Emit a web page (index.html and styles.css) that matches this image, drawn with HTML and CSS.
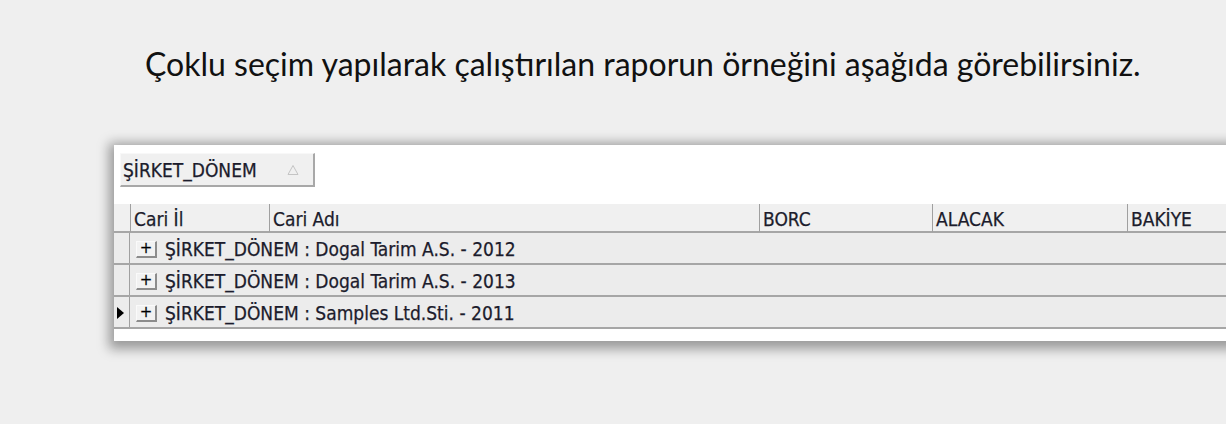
FILE: index.html
```html
<!DOCTYPE html>
<html lang="tr">
<head>
<meta charset="utf-8">
<title>Rapor</title>
<link rel="stylesheet" href="styles.css">
</head>
<body>
<p class="caption">Çoklu seçim yapılarak çalıştırılan raporun örneğini aşağıda görebilirsiniz.</p>
<div class="window">
  <div class="groupbar">
    <div class="groupbtn">
      <span class="groupbtn-text">ŞİRKET_DÖNEM</span>
      <svg class="sort-arrow" width="12" height="12" viewBox="0 0 12 12"><polygon points="6,1.5 11,10.5 1,10.5" fill="none" stroke="#c4c4c4" stroke-width="1"/></svg>
    </div>
  </div>
  <div class="grid">
    <div class="hdr">
      <div class="ind"></div>
      <div class="hcell c1">Cari İl</div>
      <div class="hcell c2">Cari Adı</div>
      <div class="hcell c3">BORC</div>
      <div class="hcell c4">ALACAK</div>
      <div class="hcell c5">BAKİYE</div>
    </div>
    <div class="grow">
      <div class="ind"></div>
      <div class="gcell"><span class="plus">+</span><span>ŞİRKET_DÖNEM : Dogal Tarim A.S. - 2012</span></div>
    </div>
    <div class="grow">
      <div class="ind"></div>
      <div class="gcell"><span class="plus">+</span><span>ŞİRKET_DÖNEM : Dogal Tarim A.S. - 2013</span></div>
    </div>
    <div class="grow">
      <div class="ind"><span class="cur"></span></div>
      <div class="gcell"><span class="plus">+</span><span>ŞİRKET_DÖNEM : Samples Ltd.Sti. - 2011</span></div>
    </div>
  </div>
</div>
</body>
</html>
```

FILE: styles.css
```css
html, body {
  margin: 0;
  padding: 0;
}
body {
  width: 1226px;
  height: 424px;
  overflow: hidden;
  background: #efefef;
}
.caption {
  margin: 0;
  padding: 44px 0 0 145px;
  height: 145px;
  box-sizing: border-box;
  font-family: Lato, "Open Sans", sans-serif;
  font-size: 32px;
  line-height: 40px;
  color: #111;
  white-space: nowrap;
}
.window {
  margin-left: 114px;
  width: 1200px;
  background: #fff;
  padding: 8px 0 12px 0;
  box-shadow: 0 3px 11px 5px rgba(0,0,0,0.36);
  font-family: "DejaVu Sans Condensed", "DejaVu Sans", sans-serif;
  font-size: 19px;
  color: #1c1c2c;
  -webkit-text-stroke: 0.25px #1c1c2c;
}
.groupbar {
  display: flex;
  padding-left: 6px;
  height: 51px;
  align-items: flex-start;
}
.groupbtn {
  display: flex;
  align-items: center;
  justify-content: space-between;
  width: 195px;
  height: 34px;
  box-sizing: border-box;
  background: #f0f0f0;
  border-top: 1px solid #f8f8f8;
  border-left: 1px solid #f8f8f8;
  border-right: 2px solid #a8a8a8;
  border-bottom: 2px solid #a8a8a8;
  padding: 0 14px 0 2px;
}
.sort-arrow { display: block; }
.grid {
  display: flex;
  flex-direction: column;
}
.hdr {
  display: grid;
  grid-template-columns: 16px 139px 490px 173px 195px 1fr;
  height: 29px;
  box-sizing: border-box;
  background: #f0f0f0;
  border-bottom: 2px solid #a6a6a6;
}
.hcell {
  border-left: 1px solid #a0a0a0;
  padding: 2px 0 0 3px;
  line-height: 26px;
  white-space: nowrap;
}
.grow {
  display: flex;
  height: 32px;
  box-sizing: border-box;
  background: #ececec;
  border-bottom: 2px solid #a6a6a6;
}
.ind {
  width: 16px;
  flex: none;
  display: flex;
  align-items: center;
  justify-content: flex-start;
  padding: 2px 0 0 3px;
  box-sizing: border-box;
}
.grow .ind {
  border-right: 1px solid #a0a0a0;
}
.cur {
  width: 0;
  height: 0;
  border-top: 6px solid transparent;
  border-bottom: 6px solid transparent;
  border-left: 7px solid #000;
}
.gcell {
  display: flex;
  align-items: center;
  padding: 3px 0 0 6px;
  box-sizing: border-box;
  white-space: nowrap;
  line-height: 27px;
}
.plus {
  width: 21px;
  height: 17px;
  box-sizing: border-box;
  border-right: 2px solid #8c8c8c;
  border-bottom: 2px solid #8c8c8c;
  border-top: 1px solid #fafafa;
  border-left: 1px solid #fafafa;
  background: #f2f2f2;
  font-size: 15px;
  line-height: 13px;
  text-align: center;
  color: #000;
  margin-right: 8px;
  font-family: "DejaVu Sans", sans-serif;
}
```
